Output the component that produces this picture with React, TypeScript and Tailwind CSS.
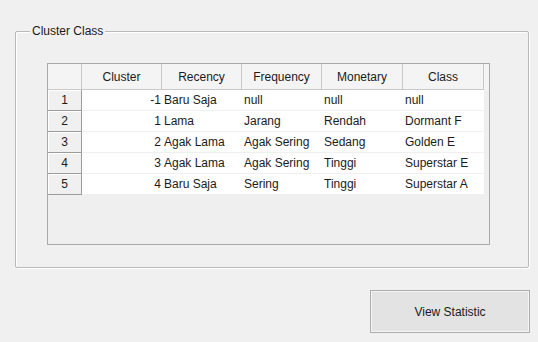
const columns = ["Cluster", "Recency", "Frequency", "Monetary", "Class"];

const rows = [
  { cluster: "-1", recency: "Baru Saja", frequency: "null", monetary: "null", cls: "null" },
  { cluster: "1", recency: "Lama", frequency: "Jarang", monetary: "Rendah", cls: "Dormant F" },
  { cluster: "2", recency: "Agak Lama", frequency: "Agak Sering", monetary: "Sedang", cls: "Golden E" },
  { cluster: "3", recency: "Agak Lama", frequency: "Agak Sering", monetary: "Tinggi", cls: "Superstar E" },
  { cluster: "4", recency: "Baru Saja", frequency: "Sering", monetary: "Tinggi", cls: "Superstar A" },
];

const gridCols = "grid grid-cols-[34px_80px_80px_80px_81px_81px]";

export default function App() {
  return (
    <div
      className="w-[538px] h-[342px] bg-[#f0f0f0] text-[12px] text-[#1b1b1b] overflow-hidden"
      style={{ fontFamily: '"Liberation Sans", Arial, sans-serif' }}
    >
      <div className="pt-[31px] pl-[15px]">
        {/* group box */}
        <div className="relative w-[514px] h-[237px] border border-[#b9b9b9] shadow-[inset_1px_1px_0_#ffffff,1px_1px_0_#ffffff] rounded-[2px]">
          <span className="absolute -top-[8px] left-[14px] bg-[#f0f0f0] px-[2px] leading-[14px]">
            Cluster Class
          </span>

          {/* data grid */}
          <div className="ml-[31px] mt-[31px] w-[443px] h-[182px] border border-[#a9a9a9] bg-[#efefef]">
            <div className={`${gridCols} h-[26px] bg-[#f4f4f4]`}>
              <div className="border-r border-b border-[#c8c8c8]" />
              {columns.map((c) => (
                <div
                  key={c}
                  className="flex items-center justify-center border-r border-b border-[#c8c8c8]"
                >
                  {c}
                </div>
              ))}
            </div>
            {rows.map((r, i) => (
              <div key={i} className={`${gridCols} h-[21px]`}>
                <div className="flex items-center justify-center bg-[#f0f0f0] border-r border-b border-[#9c9c9c] shadow-[inset_1px_1px_0_#ffffff]">
                  {i + 1}
                </div>
                <div className="flex items-center justify-end pr-[1px] bg-white border-b border-[#f0f0f0]">
                  {r.cluster}
                </div>
                <div className="flex items-center pl-[2px] bg-white border-b border-[#f0f0f0]">
                  {r.recency}
                </div>
                <div className="flex items-center pl-[2px] bg-white border-b border-[#f0f0f0]">
                  {r.frequency}
                </div>
                <div className="flex items-center pl-[2px] bg-white border-b border-[#f0f0f0]">
                  {r.monetary}
                </div>
                <div className="flex items-center pl-[2px] bg-white border-b border-[#f0f0f0]">
                  {r.cls}
                </div>
              </div>
            ))}
          </div>
        </div>
      </div>

      <div className="flex justify-end pr-[8px] mt-[22px]">
        <button className="w-[160px] h-[43px] bg-[#e3e3e3] border border-[#adadad] shadow-[inset_0_0_0_1px_#f4f4f4] text-[12px] text-[#1b1b1b]">
          View Statistic
        </button>
      </div>
    </div>
  );
}
